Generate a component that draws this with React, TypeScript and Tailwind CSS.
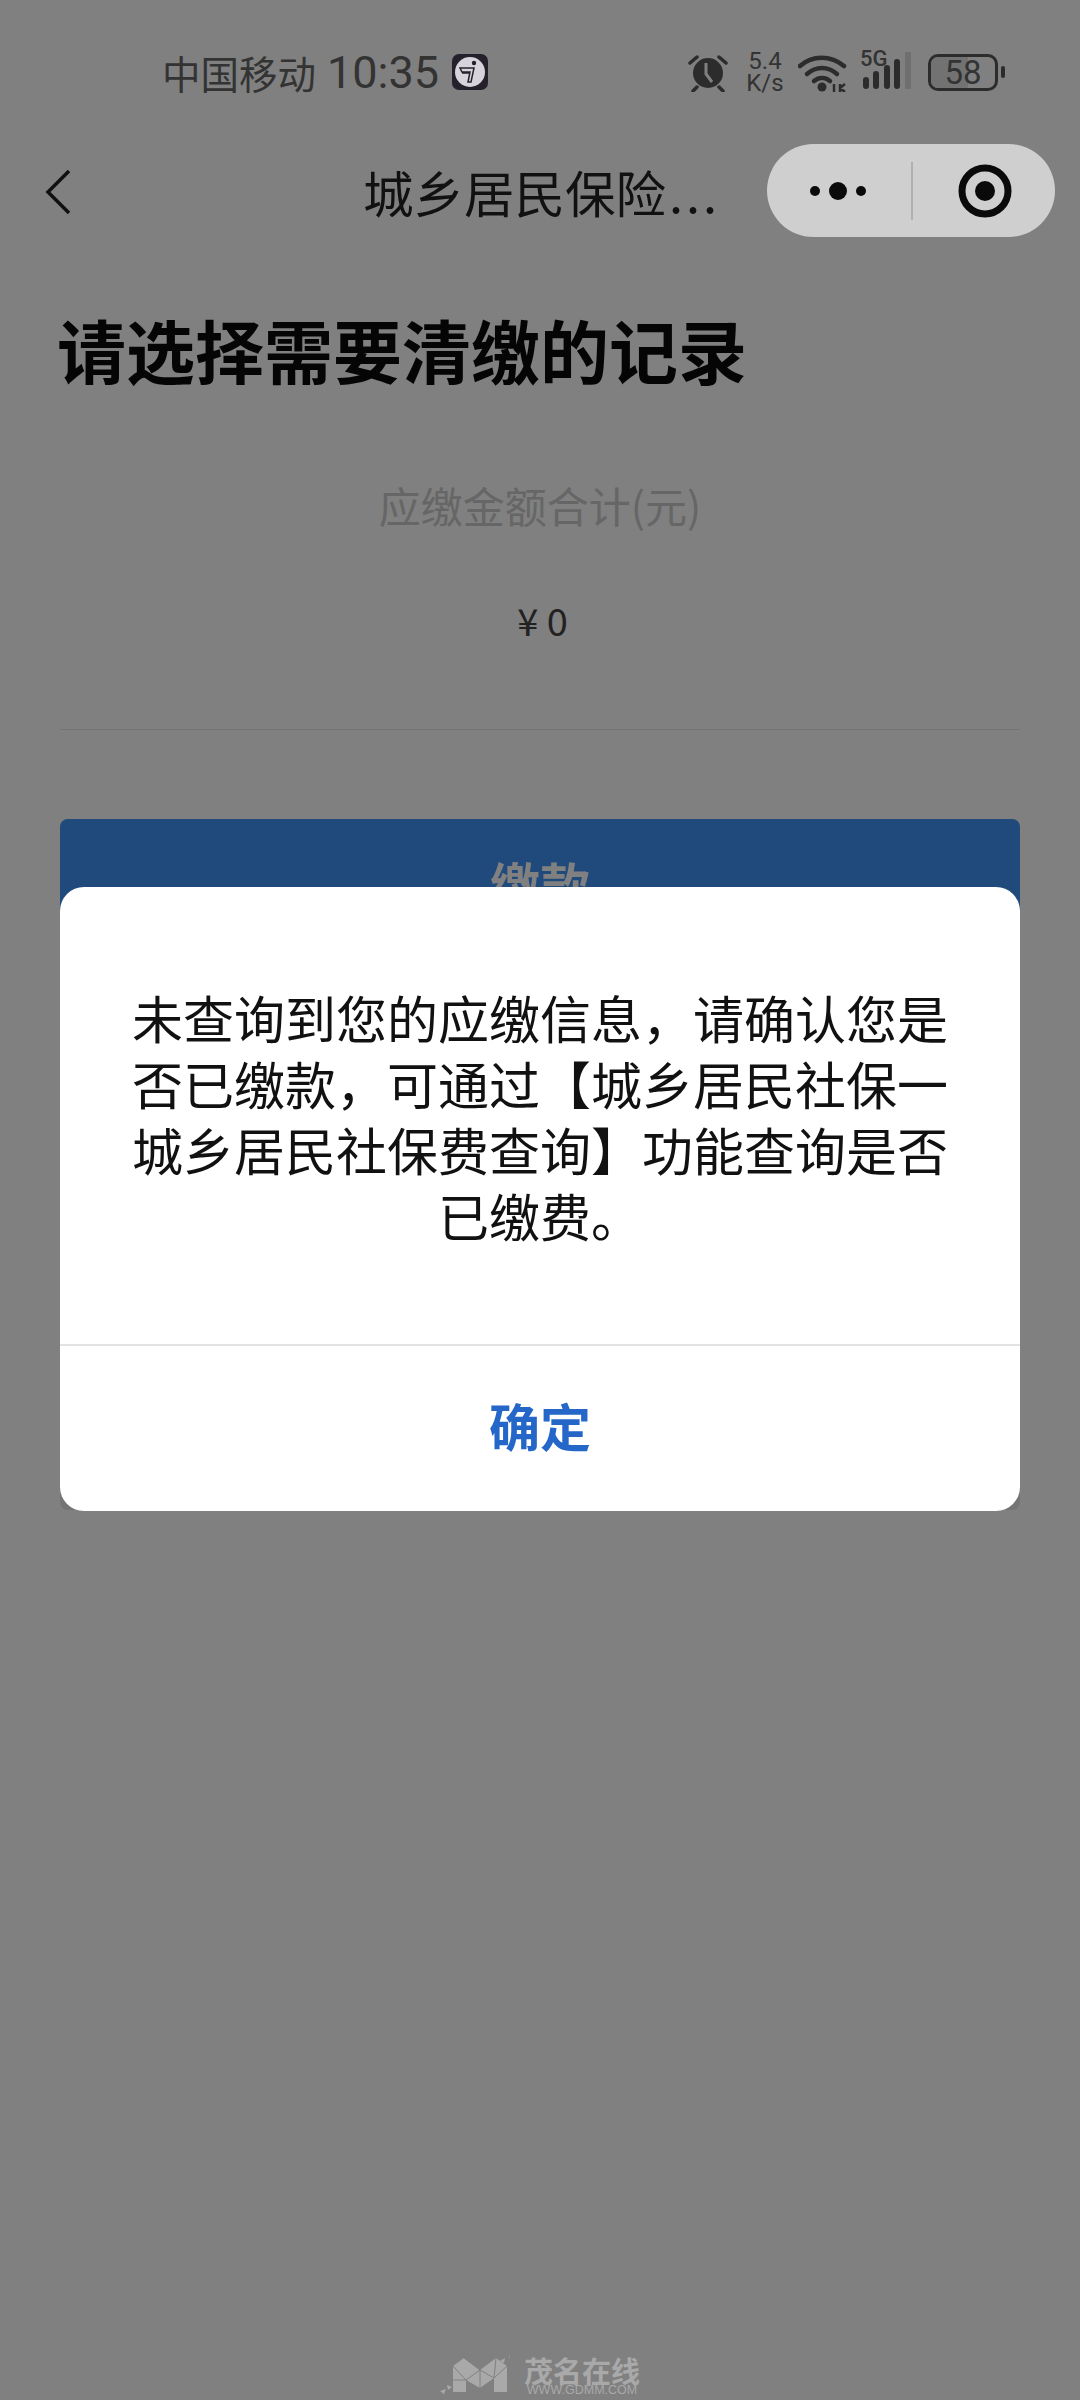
const cjk = "font-['Noto_Sans_CJK_SC','Noto_Sans',sans-serif]";

const AlarmIcon = () => (
  <svg width="44" height="40" viewBox="0 0 44 40" fill="none">
    <circle cx="22" cy="21" r="15" fill="#2c2c2c" />
    <path d="M20 11v11l6 8" stroke="#808080" strokeWidth="3" />
    <path d="M4 11l7-6M40 11l-7-6M11 35l-4 4M33 35l4 4" stroke="#2c2c2c" strokeWidth="3.5" strokeLinecap="round" />
  </svg>
);

const WifiIcon = () => (
  <svg width="50" height="40" viewBox="0 0 50 40" fill="none">
    <path d="M2 14C14 3 33 3 46 14" stroke="#2c2c2c" strokeWidth="4.5" strokeLinecap="round" />
    <path d="M9 22c9-8 21-8 30 0" stroke="#2c2c2c" strokeWidth="4.5" strokeLinecap="round" />
    <path d="M16 29c5-4 11-4 16 0" stroke="#2c2c2c" strokeWidth="4.5" strokeLinecap="round" />
    <circle cx="24" cy="35" r="4.5" fill="#2c2c2c" />
    <path d="M36 32v8M42 32v8M42 36l5-4M42 36l5 4" stroke="#2c2c2c" strokeWidth="2.5" />
  </svg>
);

const SignalIcon = () => (
  <svg width="56" height="40" viewBox="0 0 56 40" fill="none">
    <rect x="5" y="25" width="6" height="12" rx="3" fill="#2c2c2c" />
    <rect x="15" y="19" width="6" height="18" rx="3" fill="#2c2c2c" />
    <rect x="26" y="13" width="6" height="24" rx="3" fill="#2c2c2c" />
    <rect x="36" y="7" width="6" height="30" rx="3" fill="#2c2c2c" />
    <rect x="47" y="0" width="6" height="37" rx="1" fill="#6f6f6f" />
  </svg>
);

const AppBadge = () => (
  <svg width="36" height="36" viewBox="0 0 36 36">
    <rect width="36" height="36" rx="7" fill="#25212c" />
    <circle cx="18" cy="18" r="15" fill="#d6d4da" />
    <circle cx="22" cy="9" r="2.2" fill="#25212c" />
    <path d="M8 14h14l-3 14h-3l2-10H10zM10 19h7" fill="none" stroke="#25212c" strokeWidth="1.5" />
  </svg>
);

const LogoMark = () => (
  <svg width="70" height="38" viewBox="0 0 70 38" fill="#a9a9a9">
    <path d="M13 10L24 2l16 12L56 2l11 8v26H54V22l-14 10-14-8v12H13z" />
    <path d="M13 10l13 14M24 2l16 12-14 10M40 14v18M40 14l14 8 2-20M54 22l13-12M13 24h13" fill="none" stroke="#808080" strokeWidth="1" />
    <path d="M0 35l6-2-2 5zM7 29l5 2-4 3zM60 5l5-3-1 5zM69 0l1 1-1 1z" />
  </svg>
);

const StatusBar = () => (
  <div className="flex h-[146px] items-center justify-between pb-[2px] pl-[162px] pr-[75px] text-[#333333]">
    <div className="flex items-center">
      <span className="text-[38.5px] leading-none">中国移动</span>
      <span className="ml-[11px] text-[45px] leading-none font-['Roboto',sans-serif]">10:35</span>
      <span className="ml-[13px] flex"><AppBadge /></span>
    </div>
    <div className="flex items-center">
      <AlarmIcon />
      <div className="ml-[16px] flex w-[38px] flex-col items-center font-['Roboto',sans-serif] text-[24px] leading-[22px] text-[#333333]">
        <span>5.4</span>
        <span>K/s</span>
      </div>
      <span className="ml-[14px] flex"><WifiIcon /></span>
      <div className="relative ml-[10px] flex h-[40px] w-[56px]">
        <SignalIcon />
        <span className="absolute left-[2px] top-[-4px] text-[22px] font-medium leading-[22px] font-['Roboto',sans-serif]">5G</span>
      </div>
      <div className="ml-[14px] flex items-center">
        <div className="relative flex h-[37px] w-[70px] items-center justify-center overflow-hidden rounded-[10px] border-[3px] border-[#2c2c2c]">
          <div className="absolute inset-y-0 left-0 w-[58%] bg-[#727272]" />
          <span className="relative text-[33px] leading-none font-['Roboto',sans-serif]">58</span>
        </div>
        <div className="ml-[3px] h-[12px] w-[4px] rounded-full bg-[#2c2c2c]" />
      </div>
    </div>
  </div>
);

const NavBar = () => (
  <div className="relative flex h-[91px] items-center">
    <svg className="ml-[44px]" width="28" height="48" viewBox="0 0 28 48" fill="none">
      <path d="M25 3L4 24l21 21" stroke="#111111" strokeWidth="3.5" />
    </svg>
    <span className="ml-[291px] text-[50.5px] leading-none text-[#111111]">
      城乡居民保险<span className="ml-[3px] tracking-[3px]">...</span>
    </span>
    <div className="absolute left-[767px] top-[-2px] flex h-[93px] w-[288px] items-center rounded-full bg-[#cfcfcf]">
      <svg className="ml-[42px]" width="58" height="20" viewBox="0 0 58 20" fill="#0a0a0a">
        <circle cx="6" cy="10" r="5" />
        <circle cx="29" cy="10" r="9" />
        <circle cx="52" cy="10" r="5" />
      </svg>
      <div className="ml-[44px] h-[58px] w-[2px] bg-[#b0b0b0]" />
      <svg className="ml-[45px]" width="54" height="54" viewBox="0 0 54 54" fill="none">
        <circle cx="27" cy="27" r="23" stroke="#0a0a0a" strokeWidth="7" />
        <circle cx="27" cy="27" r="10" fill="#0a0a0a" />
      </svg>
    </div>
  </div>
);

const AlertDialog = () => (
  <div className="absolute left-[60px] top-[887px] w-[960px] rounded-[24px] bg-white">
    <p className="flex h-[457px] items-center justify-center px-[70px] text-center text-[51px] leading-[66px] text-[#111111]">
      <span>未查询到您的应缴信息，请确认您是否已缴款，可通过【城乡居民社保一城乡居民社保费查询】功能查询是否已缴费。</span>
    </p>
    <div className="h-[2px] bg-[#e2e2e2]" />
    <div className="flex h-[165px] items-center justify-center pb-[6px] text-[51px] font-bold leading-none text-[#2567c9]">
      确定
    </div>
  </div>
);

const Watermark = () => (
  <div className="absolute left-[440px] top-[2356px] flex items-start">
    <LogoMark />
    <div className="ml-[14px] flex flex-col items-center">
      <span className="text-[29px] font-bold leading-[28px] text-[#a9a9a9]">茂名在线</span>
      <span className="font-['Liberation_Sans',sans-serif] text-[12.5px] leading-[12px] text-[#a9a9a9]">WWW.GDMM.COM</span>
    </div>
  </div>
);

const App = () => {
  return (
    <div className={`relative h-[2400px] w-[1080px] overflow-hidden bg-[#808080] ${cjk}`}>
      <StatusBar />
      <NavBar />
      <div className="px-[60px]">
        <h1 className="-ml-[3px] mt-[62px] text-[69px] font-bold leading-[100px] text-[#050505]">请选择需要清缴的记录</h1>
        <div className="mt-[76px] text-center text-[42px] leading-[60px] text-[#666666]">应缴金额合计(元)</div>
        <div className="mt-[55px] pl-[5px] text-center text-[38px] leading-[60px] text-[#222222]">¥ 0</div>
        <div className="mt-[79px] h-[1px] bg-[#747474]" />
        <div className="mt-[89px] h-[691px] rounded-[8px] bg-[#747474]">
          <div className="flex h-[150px] justify-center rounded-[8px] bg-[#204a7c] pt-[34px] text-[50px] font-bold leading-[60px] text-[#808080]">
            缴款
          </div>
        </div>
      </div>
      <AlertDialog />
      <Watermark />
    </div>
  );
};

export default App;
